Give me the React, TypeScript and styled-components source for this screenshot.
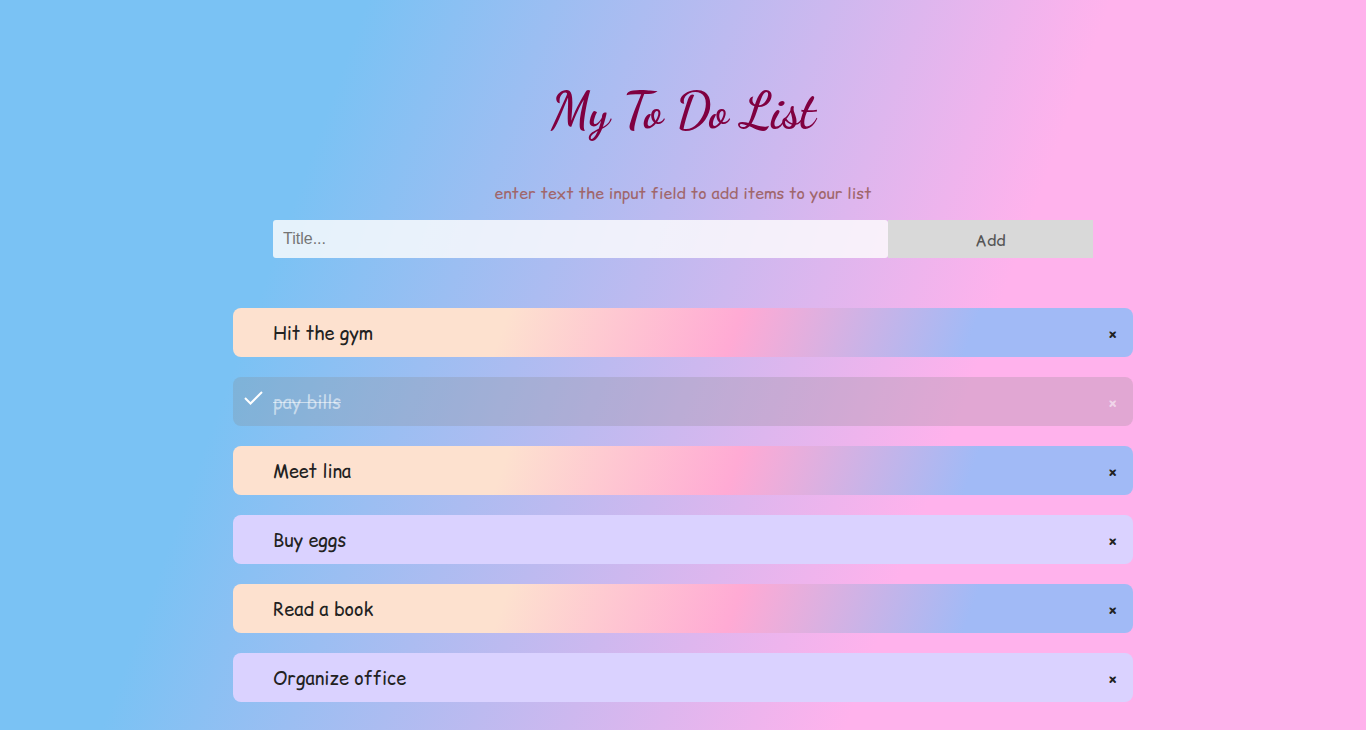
import React from 'react';
import styled, { createGlobalStyle, css } from 'styled-components';

const GlobalStyle = createGlobalStyle`
  * { box-sizing: border-box; }
  html { height: 100%; }
  body {
    margin: 0;
    height: 730px;
    overflow: hidden;
    background: linear-gradient(110deg, #7ac2f4 22.5%, #ffb2ec 68.1%) no-repeat;
    font-family: 'Comic Relief', 'Comic Sans MS', 'Noto Sans', cursive;
  }
`;

const Page = styled.main`
  width: 900px;
  margin: 0 auto;
`;

const Header = styled.header`
  height: 308px;
  padding: 75px 40px 0;
  text-align: center;
`;

const Title = styled.h1`
  margin: 0;
  height: 72px;
  font: 700 50px/72px 'Dancing Script', 'Dancing', cursive;
  color: #800040;
  white-space: nowrap;
`;

const Hint = styled.p`
  margin: 33px 0 0;
  height: 26px;
  font-size: 16px;
  line-height: 26px;
  color: #a0666b;
  white-space: nowrap;
`;

const Form = styled.div`
  display: flex;
  height: 38px;
  margin-top: 14px;
`;

const Field = styled.input`
  width: 75%;
  height: 38px;
  padding: 0 10px;
  border: 0;
  border-radius: 3px;
  background: rgba(253, 252, 253, 0.82);
  font: 16px 'Liberation Sans', sans-serif;
  &::placeholder { color: #757575; }
`;

const AddButton = styled.button`
  width: 25%;
  padding: 2px 6px 0;
  border: 0;
  background: #d9d9d9;
  color: #555;
  font-family: inherit;
  font-size: 16px;
`;

const List = styled.ul`
  display: grid;
  gap: 20px;
  margin: 0;
  padding: 0;
  list-style: none;
`;

type Tone = 'warm' | 'plain' | 'done';

const tones = {
  warm: css`background: linear-gradient(110deg, #fde1cf 30.2%, #ffaad4 55.6%, #a1baf6 81.5%);`,
  plain: css`background: #dad2ff;`,
  done: css`background: rgba(136, 136, 136, 0.25); color: rgba(255, 255, 255, 0.55);`,
};

const Item = styled.li<{ $tone: Tone }>`
  display: flex;
  align-items: center;
  height: 49px;
  padding: 2px 15px 0 11px;
  border-radius: 8px;
  color: #222;
  font-size: 18px;
  ${({ $tone }) => tones[$tone]}
`;

const Mark = styled.span`
  width: 29px;
  height: 30px;
`;

const Label = styled.span<{ $done: boolean }>`
  flex: 1;
  text-decoration: ${({ $done }) => ($done ? 'line-through' : 'none')};
`;

const Close = styled.span`
  padding-top: 1px;
  font-size: 17px;
  font-weight: 700;
`;

const items: { text: string; tone: Tone }[] = [
  { text: 'Hit the gym', tone: 'warm' },
  { text: 'pay bills', tone: 'done' },
  { text: 'Meet lina', tone: 'warm' },
  { text: 'Buy eggs', tone: 'plain' },
  { text: 'Read a book', tone: 'warm' },
  { text: 'Organize office', tone: 'plain' },
];

export default function App() {
  return (
    <Page>
      <GlobalStyle />
      <Header>
        <Title>My To Do List</Title>
        <Hint>enter text the input field to add items to your list</Hint>
        <Form>
          <Field placeholder="Title..." />
          <AddButton>Add</AddButton>
        </Form>
      </Header>
      <List>
        {items.map(({ text, tone }) => (
          <Item key={text} $tone={tone}>
            <Mark>
              {tone === 'done' && (
                <svg width="20" height="20" viewBox="0 0 20 20" fill="none" stroke="#fff" strokeWidth="2">
                  <path d="M1 10 L6.5 15.5 L18 4" />
                </svg>
              )}
            </Mark>
            <Label $done={tone === 'done'}>{text}</Label>
            <Close>×</Close>
          </Item>
        ))}
      </List>
    </Page>
  );
}
